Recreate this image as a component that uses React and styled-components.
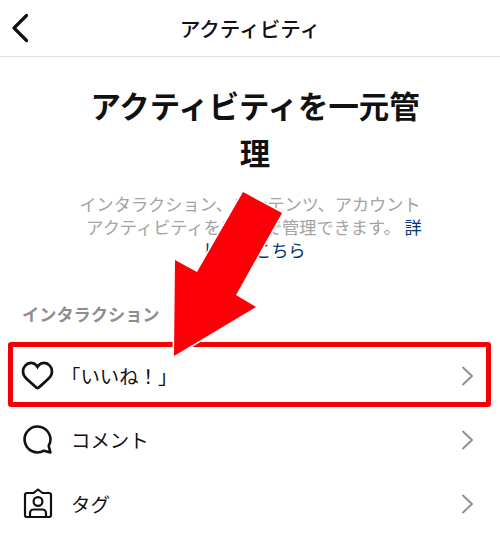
import React from 'react';
import styled, { createGlobalStyle } from 'styled-components';

const GlobalStyle = createGlobalStyle`
    html, body { margin: 0; padding: 0; background: #ffffff; }
    body { font-family: "Noto Sans CJK JP", "Liberation Sans", sans-serif; }
`

const Page = styled.div`
    position: relative;
    width: 500px; height: 539px;
    overflow: hidden;
    background: #ffffff; color: #111111;
`

const Header = styled.header`
    display: grid;
    grid-template-columns: 60px 1fr 60px;
    align-items: center;
    height: 56px;
    border-bottom: 1px solid #e3e3e3;
`
const BackButton = styled.div`
    display: flex;
    padding-left: 8px;
`
const HeaderTitle = styled.div`
    text-align: center;
    font-size: 20.6px; font-weight: 500;
    line-height: 54px;
`

const Intro = styled.section`
    padding: 25px 0 0;
    text-align: center;
`
const Title = styled.h1`
    margin: 0 auto;
    width: 345px;
    padding-left: 10px;
    font-size: 30.4px; font-weight: 700;
    line-height: 47px;
`
const Description = styled.p`
    margin: 16px auto 0;
    width: 346px;
    padding-left: 8px;
    text-indent: -8px;
    font-size: 17.2px;
    line-height: 23px;
    color: #a3a3a3;
`
const MoreLink = styled.span`
    color: #00376b;
`

const SectionLabel = styled.h2`
    margin: 41px 0 0;
    padding-left: 22px;
    font-size: 17.2px; font-weight: 700;
    line-height: 24px;
    color: #8e8e8e;
`

const List = styled.div`
    display: flex;
    flex-direction: column;
    margin-top: 16px;
`
const Row = styled.div`
    position: relative;
    box-sizing: border-box;
    display: flex;
    align-items: center;
    gap: 18px;
    height: 64px;
    padding: 3px 26px 0 22px;
    font-size: 19.4px;

    ${({ $highlight }) => $highlight && `
        &::after {
            content: "";
            position: absolute;
            left: 8px; right: 9px; top: 0; bottom: -1px;
            border: 5px solid #f40006;
            border-radius: 3px;
        }
    `}
`
const RowIcon = styled.div`
    display: flex;
    flex: none;
    width: 31px;
    justify-content: center;

    svg { flex: none; }
`
const RowLabel = styled.div`
    flex: 1;
    margin-left: ${({ $bracket }) => ($bracket ? '-10px' : '0')};
`

const Arrow = styled.svg`
    position: absolute;
    left: 0; top: 0;
    pointer-events: none;
`

const Chevron = () => (
    <svg width="13" height="20" viewBox="0 0 13 20" fill="none" stroke="#8a8a8a" strokeWidth="1.8" strokeLinecap="round">
        <path d="M2 1.5 L11 10 L2 18.5" />
    </svg>
)

const Heart = () => (
    <svg width="33" height="33" viewBox="0 0 24 24" fill="#111111">
        <path d="M16.792 3.904A4.989 4.989 0 0 1 21.5 9.122c0 3.072-2.652 4.959-5.197 7.222-2.512 2.243-3.865 3.469-4.303 3.752-.477-.309-2.143-1.823-4.303-3.752C5.141 14.072 2.5 12.167 2.5 9.122a4.989 4.989 0 0 1 4.708-5.218 4.21 4.21 0 0 1 3.675 1.941c.84 1.175.98 1.763 1.12 1.763s.278-.588 1.11-1.766a4.17 4.17 0 0 1 3.679-1.938m0-2a6.04 6.04 0 0 0-4.797 2.127 6.052 6.052 0 0 0-4.787-2.127A6.985 6.985 0 0 0 .5 9.122c0 3.61 2.55 5.827 5.015 7.97.283.246.569.494.853.747l1.027.918a44.998 44.998 0 0 0 3.518 3.018 2 2 0 0 0 2.174 0 45.263 45.263 0 0 0 3.626-3.115l.922-.824c.293-.26.59-.519.885-.774 2.334-2.025 4.98-4.32 4.98-7.94a6.985 6.985 0 0 0-6.708-7.218Z" />
    </svg>
)

const Bubble = () => (
    <svg width="31" height="31" viewBox="0 0 24 24" fill="none" stroke="#111111" strokeWidth="2" strokeLinejoin="round">
        <path d="M20.656 17.008a9.993 9.993 0 1 0-3.59 3.615L22 22Z" />
    </svg>
)

const TagIcon = () => (
    <svg width="30" height="31" viewBox="0 0 30 31" fill="none" stroke="#111111" strokeWidth="2.2" strokeLinejoin="round">
        <path d="M10.5 5 H4 a2 2 0 0 0 -2 2 V27 a2 2 0 0 0 2 2 H26 a2 2 0 0 0 2 -2 V7 a2 2 0 0 0 -2 -2 H19.5 L15 1.5 Z" />
        <circle cx="15" cy="13.5" r="4.4" />
        <path d="M7 28.5 V25 a3.5 3.5 0 0 1 3.5 -3.5 H19.5 a3.5 3.5 0 0 1 3.5 3.5 V28.5" />
    </svg>
)

const rows = [
    { label: '「いいね！」', icon: <Heart />, highlight: true },
    { label: 'コメント', icon: <Bubble /> },
    { label: 'タグ', icon: <TagIcon /> },
];

function App(){
    return(
        <Page>
            <GlobalStyle />
            <Header>
                <BackButton>
                    <svg width="26" height="30" viewBox="0 0 26 30" fill="none" stroke="#111111" strokeWidth="3.2" strokeLinecap="round" strokeLinejoin="round">
                        <path d="M18.5 2.5 L6 15 L18.5 27.5" />
                    </svg>
                </BackButton>
                <HeaderTitle>アクティビティ</HeaderTitle>
            </Header>
            <Intro>
                <Title>アクティビティを一元管理</Title>
                <Description>
                    インタラクション、コンテンツ、アカウントアクティビティを1か所で管理できます。 <MoreLink>詳しくはこちら</MoreLink>
                </Description>
            </Intro>
            <SectionLabel>インタラクション</SectionLabel>
            <List>
                {rows.map((row) => (
                    <Row key={row.label} $highlight={row.highlight}>
                        <RowIcon>{row.icon}</RowIcon>
                        <RowLabel $bracket={row.highlight}>{row.label}</RowLabel>
                        <Chevron />
                    </Row>
                ))}
            </List>
            <Arrow width="500" height="539" viewBox="0 0 500 539">
                <polygon
                    points="243,192 282,213 236,295 256,307 174,356 175,260 197,272"
                    fill="#fb0007"
                    stroke="#ffffff"
                    strokeWidth="3"
                    strokeLinejoin="miter"
                    paintOrder="stroke"
                />
            </Arrow>
        </Page>
    )
}

export default App;
